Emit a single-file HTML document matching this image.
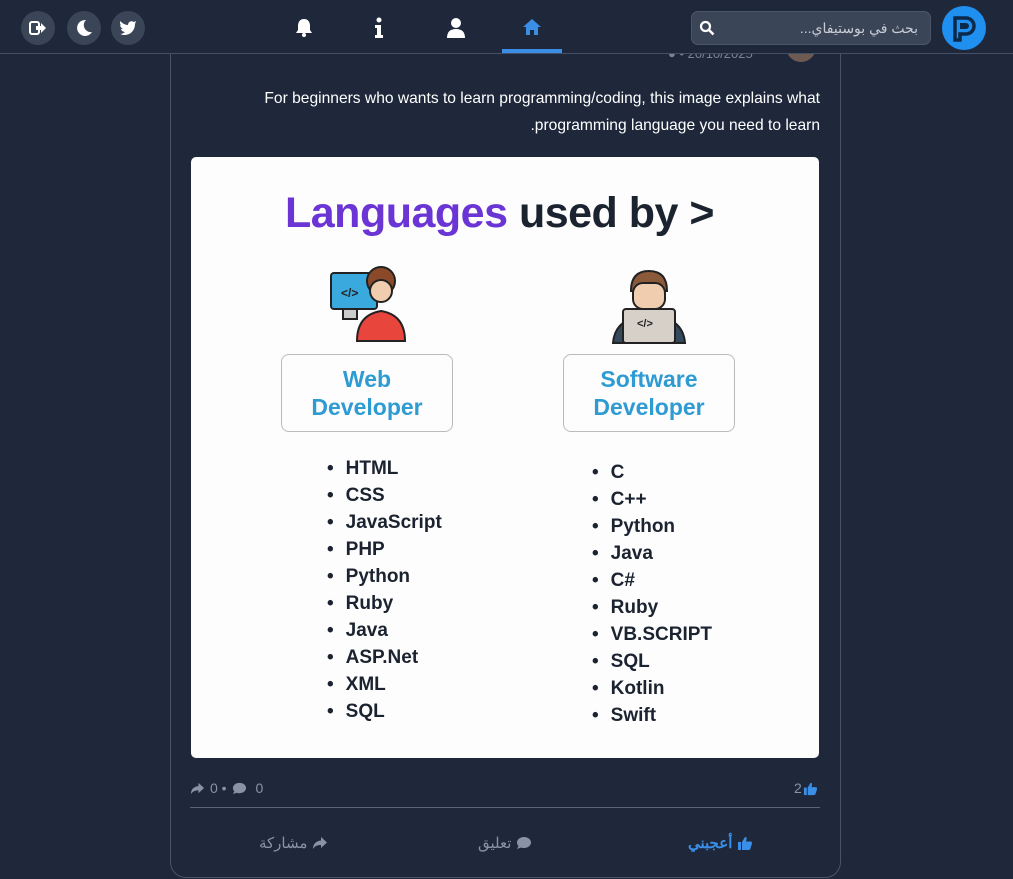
<!DOCTYPE html>
<html><head><meta charset="utf-8">
<style>
*{margin:0;padding:0;box-sizing:border-box}
body{width:1013px;height:879px;background:#1e283a;font-family:"Liberation Sans","Noto Sans CJK SC",sans-serif;position:relative;overflow:hidden;color:#fff}
.card{position:absolute;left:170px;top:-20px;width:671px;height:898px;border:1px solid #4a5466;border-radius:16px}
.hdr{position:absolute;left:0;top:0;width:1013px;height:54px;background:#1e283a;border-bottom:1px solid #465064}
.circ{position:absolute;top:11px;width:34px;height:34px;border-radius:50%;background:#3b4558}
.search{position:absolute;left:691px;top:11px;width:240px;height:34px;border-radius:7px;background:#3b4558;border:1px solid #4b5568}
.search span{position:absolute;right:12px;top:8px;font-size:14px;color:#c8ccd4}
.logo{position:absolute;left:942px;top:6px;width:44px;height:44px;border-radius:50%;background:#1f8ff0}
.txt{position:absolute;right:193px;font-size:15.6px;color:#fff;text-align:right;white-space:nowrap}
.img{position:absolute;left:191px;top:157px;width:628px;height:601px;background:#fdfdfd;border-radius:5px;color:#1c2330}
.img .t{position:absolute;left:94px;top:32px;font-size:43px;font-weight:bold;letter-spacing:-0.5px}
.box{position:absolute;width:172px;height:78px;border:1.5px solid #bbb;border-radius:8px;text-align:center;color:#2e9bd3;font-weight:bold;font-size:23px;line-height:28px;padding-top:10px}
ul{position:absolute;list-style:none;font-weight:bold;font-size:19px;line-height:27px}
ul li:before{content:"•";margin-right:12px;}
.muted{color:#8a93a3}
.ft{position:absolute;font-size:15px;display:flex;align-items:center;gap:5px}
</style></head><body>
<div class="card"></div>
<div style="position:absolute;left:668px;top:46px;font-size:13px;color:#7b8495">● • 20/10/2025</div>
<div style="position:absolute;left:786px;top:44px;width:30px;height:18px;border-radius:0 0 15px 15px;background:#6d5a50"></div>
<div class="txt" style="top:90px">For beginners who wants to learn programming/coding, this image explains what</div>
<div class="txt" style="top:117px">.programming language you need to learn</div>
<div class="img">
 <div class="t"><span style="color:#6a35d4">Languages</span> used by &gt;</div>
 <svg style="position:absolute;left:138px;top:108px" width="80" height="78" viewBox="0 0 80 78">
  <rect x="2" y="8" width="46" height="36" rx="3" fill="#3aa9de" stroke="#222" stroke-width="2"/>
  <text x="12" y="32" font-size="12" font-weight="bold" fill="#222" font-family="Liberation Sans">&lt;/&gt;</text>
  <rect x="14" y="44" width="14" height="10" fill="#ccc" stroke="#222" stroke-width="2"/>
  <circle cx="52" cy="16" r="14" fill="#8a4a2a" stroke="#222" stroke-width="2"/>
  <circle cx="52" cy="26" r="11" fill="#f1cdb0" stroke="#222" stroke-width="2"/>
  <path d="M28 76 Q28 50 52 46 Q76 50 76 76Z" fill="#e8463c" stroke="#222" stroke-width="2"/>
 </svg>
 <svg style="position:absolute;left:418px;top:112px" width="80" height="76" viewBox="0 0 80 76">
  <path d="M22 22 Q22 2 40 2 Q58 2 58 22Z" fill="#8a5a3a" stroke="#222" stroke-width="2"/>
  <rect x="24" y="14" width="32" height="26" rx="10" fill="#f1cdb0" stroke="#222" stroke-width="2"/>
  <path d="M4 74 Q6 48 40 46 Q74 48 76 74Z" fill="#34495e" stroke="#222" stroke-width="2"/>
  <rect x="14" y="40" width="52" height="34" rx="3" fill="#d6d0c8" stroke="#222" stroke-width="2"/>
  <text x="28" y="58" font-size="11" font-weight="bold" fill="#222" font-family="Liberation Sans">&lt;/&gt;</text>
 </svg>
 <div class="box" style="left:90px;top:197px">Web<br>Developer</div>
 <div class="box" style="left:372px;top:197px">Software<br>Developer</div>
 <ul style="left:136px;top:298px"><li>HTML</li><li>CSS</li><li>JavaScript</li><li>PHP</li><li>Python</li><li>Ruby</li><li>Java</li><li>ASP.Net</li><li>XML</li><li>SQL</li></ul>
 <ul style="left:401px;top:302px"><li>C</li><li>C++</li><li>Python</li><li>Java</li><li>C#</li><li>Ruby</li><li>VB.SCRIPT</li><li>SQL</li><li>Kotlin</li><li>Swift</li></ul>
</div>
<svg width="0" height="0" style="position:absolute"><defs>
<symbol id="sh" viewBox="0 0 16 16"><path d="M9 2l6 5.5L9 13V10C5 10 3 11 1 14c0-5 3-8 8-8.5z" fill="currentColor"/></symbol>
<symbol id="cm" viewBox="0 0 16 16"><path d="M8 2c4 0 7 2.5 7 5.5S12 13 8 13c-1 0-2 0-3-.5L1 14l1.5-3C1.5 10 1 9 1 7.5 1 4.5 4 2 8 2z" fill="currentColor"/></symbol>
<symbol id="lk" viewBox="0 0 16 16"><rect x="1" y="7" width="3" height="8" fill="currentColor"/><path d="M5 7l3-5c1.5 0 2 1 1.5 2.5L9 6.5h4.5c1 0 1.8 1 1.5 2l-1.5 5c-.3 1-1 1.5-2 1.5H5z" fill="currentColor"/></symbol>
</defs></svg>
<div class="ft muted" style="left:190px;top:780px;font-size:14px;color:#8a93a3"><svg width="15" height="15" style="color:#8a93a3"><use href="#sh"/></svg>0 • <svg width="15" height="15" style="color:#8a93a3"><use href="#cm"/></svg>&nbsp;0</div>
<div class="ft" style="left:794px;top:780px;font-size:14px;color:#8a93a3;gap:1px">2<svg width="15" height="15" style="color:#3a8ee6"><use href="#lk"/></svg></div>
<div style="position:absolute;left:190px;top:807px;width:630px;height:1px;background:#5a6476"></div>
<div class="ft" style="left:688px;top:834px;color:#3a8ee6;font-weight:bold">أعجبني<svg width="16" height="16" style="color:#3a8ee6"><use href="#lk"/></svg></div>
<div class="ft muted" style="left:478px;top:834px">تعليق<svg width="16" height="16" style="color:#8a93a3"><use href="#cm"/></svg></div>
<div class="ft muted" style="left:259px;top:834px">مشاركة<svg width="16" height="16" style="color:#8a93a3"><use href="#sh"/></svg></div>
<div class="hdr">
 <div class="circ" style="left:21px"></div><div class="circ" style="left:67px"></div><div class="circ" style="left:111px"></div>
 <svg style="position:absolute;left:29px;top:19px" width="18" height="18" viewBox="0 0 18 18"><rect x="1" y="3" width="9" height="12" rx="2" fill="none" stroke="#fff" stroke-width="2"/><path d="M7 7h5V4l5 5-5 5v-3H7z" fill="#fff"/></svg>
 <svg style="position:absolute;left:75px;top:19px" width="18" height="18" viewBox="0 0 18 18"><path d="M11 1A8 8 0 1 0 17 13 7 7 0 0 1 11 1z" fill="#fff"/></svg>
 <svg style="position:absolute;left:119px;top:18px" width="18" height="18" viewBox="0 0 18 18"><path d="M1 3c3 3 6 4 8 4 0-3 3-5 6-3l2-1-1 3c0 6-4 11-11 11-2 0-3-1-4-1 2 0 4-1 5-2-2 0-4-2-4-3h2c-2-1-3-3-3-4l2 1C1 7 1 5 1 3z" fill="#fff"/></svg>
 <svg style="position:absolute;left:295px;top:18px" width="18" height="20" viewBox="0 0 18 20"><path d="M9 1c4 0 6 3 6 7v4l2 3H1l2-3V8c0-4 2-7 6-7z" fill="#fff"/><circle cx="9" cy="17" r="2" fill="#fff"/></svg>
 <svg style="position:absolute;left:374px;top:17px" width="10" height="22" viewBox="0 0 10 22"><circle cx="5" cy="3" r="2.5" fill="#fff"/><path d="M1 8h6v10h2v3H1v-3h2v-7H1z" fill="#fff"/></svg>
 <svg style="position:absolute;left:446px;top:17px" width="20" height="22" viewBox="0 0 20 22"><circle cx="10" cy="6" r="5" fill="#fff"/><path d="M1 21c0-6 3-9 9-9s9 3 9 9z" fill="#fff"/></svg>
 <svg style="position:absolute;left:522px;top:18px" width="20" height="18" viewBox="0 0 20 18"><path d="M10 1 1 9h3v8h4v-5h4v5h4V9h3z" fill="#3a8ee6"/></svg>
 <div style="position:absolute;left:502px;top:49px;width:60px;height:4px;background:#3a8ee6"></div>
 <div class="search"><span dir="rtl">بحث في بوستيفاي...</span>
  <svg style="position:absolute;left:7px;top:8px" width="16" height="16" viewBox="0 0 16 16"><circle cx="6.5" cy="6.5" r="4.5" fill="none" stroke="#fff" stroke-width="2.2"/><path d="M10 10l4.5 4.5" stroke="#fff" stroke-width="2.5"/></svg></div>
 <div class="logo"><svg width="44" height="44" viewBox="0 0 44 44"><path d="M13 34V12h11a8 8 0 0 1 0 16h-6v6z" fill="none" stroke="#0b2a4a" stroke-width="3.5"/><path d="M18 17h6a3 3 0 0 1 0 6h-6z" fill="#0b2a4a"/></svg></div>
</div>
</body></html>
